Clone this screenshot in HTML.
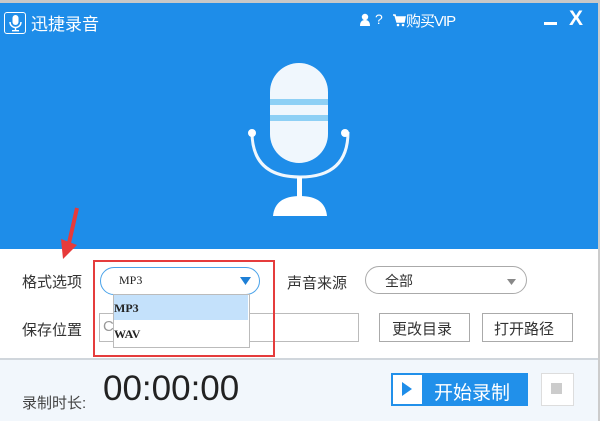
<!DOCTYPE html>
<html><head><meta charset="utf-8"><style>
body{margin:0;width:600px;height:421px;position:relative;overflow:hidden;background:#fff;font-family:"Liberation Sans","Noto Sans CJK SC",sans-serif;}
.a{position:absolute}
.t{font-size:15px;color:#333}
</style></head><body>
<div class="a" style="left:0;top:0;width:600px;height:3px;background:#c8c8c8"></div>
<div class="a" style="left:0;top:3px;width:600px;height:246px;background:#1e8de9"></div>
<div class="a" style="left:4px;top:12px;width:20px;height:20px;border:1.5px solid #fff;border-radius:3px"></div>
<svg class="a" style="left:4px;top:12px" width="23" height="23"><rect x="8.5" y="3" width="6" height="10" rx="3" fill="#fff"/><path d="M6 10 a5.5 5.5 0 0 0 11 0" stroke="#fff" stroke-width="1.5" fill="none"/><rect x="10.8" y="15" width="1.4" height="3" fill="#fff"/><rect x="8" y="18" width="7" height="1.4" fill="#fff"/></svg>
<div class="a" style="left:31px;top:10px;color:#fff;font-size:17px">迅捷录音</div>
<svg class="a" style="left:359px;top:13px" width="12" height="14"><circle cx="6" cy="4" r="3.2" fill="#fff"/><path d="M1 13 q0-6 5-6 q5 0 5 6z" fill="#fff"/></svg>
<div class="a" style="left:375px;top:11px;color:#fff;font-size:14px">?</div>
<svg class="a" style="left:392px;top:13px" width="14" height="14"><path d="M1 2h2l2 7h7l1-5H4" stroke="#fff" stroke-width="1.6" fill="#fff"/><circle cx="6" cy="12" r="1.3" fill="#fff"/><circle cx="11" cy="12" r="1.3" fill="#fff"/></svg>
<div class="a" style="left:406px;top:10px;color:#fff;font-size:15px;letter-spacing:-1px">购买VIP</div>
<div class="a" style="left:544px;top:22px;width:13px;height:3px;background:#fff"></div>
<div class="a" style="left:569px;top:7px;color:#fff;font-size:21px;font-weight:bold">X</div>
<svg class="a" style="left:240px;top:55px" width="120" height="170">
<rect x="30" y="8" width="58" height="100" rx="29" fill="#f0f7fd"/>
<rect x="30" y="44" width="58" height="6" fill="#8ed0f5"/>
<rect x="30" y="60" width="58" height="6" fill="#8ed0f5"/>
<path d="M12 77 q0 45 48 45 q48 0 48 -45" stroke="#f0f7fd" stroke-width="3" fill="none"/>
<circle cx="12" cy="78" r="4" fill="#fff"/><circle cx="105" cy="78" r="4" fill="#fff"/>
<rect x="57" y="122" width="5" height="20" fill="#fff"/>
<path d="M33 161 q2 -20 27 -20 q25 0 27 20z" fill="#fff"/>
</svg>
<svg class="a" style="left:55px;top:205px" width="30" height="60"><path d="M22 3 L14 38" stroke="#e73a3a" stroke-width="4"/><path d="M6 34 L8 54 L22 40z" fill="#e73a3a"/></svg>
<div class="a t" style="left:22px;top:271px">格式选项</div>
<div class="a" style="left:100px;top:267px;width:158px;height:26px;border:1.5px solid #4aa3ea;border-radius:14px;background:#fff"></div>
<div class="a" style="left:119px;top:273px;font-family:'Liberation Serif',serif;font-size:12px;color:#222">MP3</div>
<svg class="a" style="left:240px;top:277px" width="11" height="8"><path d="M0 0h11L5.5 8z" fill="#1e7fd6"/></svg>
<div class="a t" style="left:287px;top:272px">声音来源</div>
<div class="a" style="left:365px;top:266px;width:160px;height:26px;border:1px solid #aaa;border-radius:14px"></div>
<div class="a t" style="left:385px;top:271px;font-size:14px">全部</div>
<svg class="a" style="left:507px;top:279px" width="9" height="6"><path d="M0 0h9L4.5 6z" fill="#888"/></svg>
<div class="a t" style="left:22px;top:319px">保存位置</div>
<div class="a" style="left:99px;top:313px;width:258px;height:27px;border:1px solid #bbb"></div>
<div class="a t" style="left:103px;top:318px;color:#999">C</div>
<div class="a" style="left:379px;top:313px;width:89px;height:27px;border:1px solid #aaa"></div>
<div class="a t" style="left:392px;top:318px">更改目录</div>
<div class="a" style="left:482px;top:313px;width:89px;height:27px;border:1px solid #aaa"></div>
<div class="a t" style="left:494px;top:318px">打开路径</div>
<div class="a" style="left:113px;top:294px;width:135px;height:52px;border:1px solid #bbb;background:#fff"></div>
<div class="a" style="left:114px;top:295px;width:134px;height:25px;background:#c4e1fb"></div>
<div class="a" style="left:114px;top:301px;font-family:'Liberation Serif',serif;font-size:12px;font-weight:bold;color:#222">MP3</div>
<div class="a" style="left:114px;top:327px;font-family:'Liberation Serif',serif;font-size:12px;font-weight:bold;color:#222">WAV</div>
<div class="a" style="left:93px;top:260px;width:178px;height:93px;border:2px solid #e53c3c"></div>
<div class="a" style="left:0;top:358px;width:600px;height:2px;background:#d0d6dc"></div>
<div class="a" style="left:0;top:360px;width:600px;height:61px;background:#f2f7fc"></div>
<div class="a" style="left:22px;top:392px;font-size:15px;color:#444">录制时长:</div>
<div class="a" style="left:103px;top:369px;font-size:35px;color:#222">00:00:00</div>
<div class="a" style="left:391px;top:373px;width:137px;height:33px;background:#2190ea"></div>
<div class="a" style="left:393px;top:375px;width:29px;height:29px;background:#fff"></div>
<svg class="a" style="left:402px;top:382px" width="10" height="14"><path d="M0 0L10 7L0 14z" fill="#1e8de9"/></svg>
<div class="a" style="left:434px;top:378px;font-size:19px;color:#fff">开始录制</div>
<div class="a" style="left:541px;top:373px;width:31px;height:31px;border:1px solid #ddd;background:#fff"></div>
<div class="a" style="left:551px;top:383px;width:11px;height:11px;background:#ccc"></div>
<div class="a" style="left:598px;top:3px;width:2px;height:418px;background:#ccc"></div>
</body></html>
